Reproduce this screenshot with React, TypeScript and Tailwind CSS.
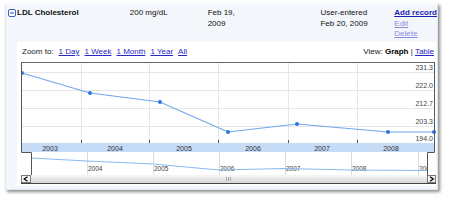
const ticks = [81, 149, 218, 288, 357];
const hLines = [72, 90, 108, 126];
const values = [
  { y: 70, label: "231.3" },
  { y: 88, label: "222.0" },
  { y: 106, label: "212.7" },
  { y: 124, label: "203.3" },
  { y: 141, label: "194.0" },
];
const years = [
  { x: 50, label: "2003" },
  { x: 115, label: "2004" },
  { x: 184, label: "2005" },
  { x: 253, label: "2006" },
  { x: 322, label: "2007" },
  { x: 391, label: "2008" },
];
const points: [number, number][] = [
  [22, 73],
  [90, 93],
  [160, 102],
  [228, 132],
  [297, 124],
  [388, 132],
  [434, 132],
];
const overview = [
  { x: 87, label: "2004" },
  { x: 153, label: "2005" },
  { x: 219, label: "2006" },
  { x: 285, label: "2007" },
  { x: 351, label: "2008" },
  { x: 418, label: "2009" },
];

function MinusBox() {
  return (
    <svg width="8" height="8" viewBox="0 0 8 8" className="mt-[1px] shrink-0">
      <rect x="0.5" y="0.5" width="7" height="7" rx="1.5" fill="#fff" stroke="#3d5fc4" />
      <line x1="2" y1="4" x2="6" y2="4" stroke="#3d5fc4" strokeWidth="1.2" />
    </svg>
  );
}

function Chart() {
  return (
    <svg
      width="415"
      height="122"
      viewBox="21 62 415 122"
      className="block ml-[4px]"
      fontFamily="'Liberation Sans', Arial, sans-serif"
    >
      <defs>
        <linearGradient id="track" x1="0" y1="0" x2="0" y2="1">
          <stop offset="0" stopColor="#f6f6f6" />
          <stop offset="1" stopColor="#d6d6d6" />
        </linearGradient>
        <clipPath id="ov">
          <rect x="31" y="152" width="396" height="23" />
        </clipPath>
      </defs>

      {/* main plot */}
      <rect x="21" y="62" width="413" height="81" fill="#fff" />
      {hLines.map((y) => (
        <line key={y} x1="21" x2="434" y1={y + 0.5} y2={y + 0.5} stroke="#e6e6e6" />
      ))}
      {ticks.map((x) => (
        <line key={x} x1={x + 0.5} x2={x + 0.5} y1="62" y2="143" stroke="#e6e6e6" />
      ))}
      {values.map((v) => (
        <text key={v.label} x="433" y={v.y} fontSize="7" textAnchor="end" fill="#444">
          {v.label}
        </text>
      ))}
      <polyline
        points={points.map((p) => p.join(",")).join(" ")}
        fill="none"
        stroke="#6fa6ee"
        strokeWidth="1.2"
      />
      {points.map(([x, y]) => (
        <circle key={x} cx={x} cy={y} r="2" fill="#2f74e0" />
      ))}

      {/* year band */}
      <rect x="21" y="143" width="413" height="9" fill="#c6dbf6" />
      {ticks.map((x) => (
        <line key={x} x1={x + 0.5} x2={x + 0.5} y1="140" y2="143" stroke="#555" />
      ))}
      {years.map((y) => (
        <text key={y.label} x={y.x} y="150.5" fontSize="7" textAnchor="middle" fill="#333">
          {y.label}
        </text>
      ))}

      {/* overview */}
      <rect x="31" y="152" width="396" height="23" fill="#fff" />
      <g clipPath="url(#ov)">
        {overview.map((o) => (
          <g key={o.label}>
            <line x1={o.x + 0.5} x2={o.x + 0.5} y1="152" y2="175" stroke="#dcdcdc" />
            <text x={o.x + 1} y="171" fontSize="6.5" fill="#444">
              {o.label}
            </text>
          </g>
        ))}
        <polyline
          points="31,158 87,161 153,164 219,170 285,168.5 351,170 427,170.5"
          fill="none"
          stroke="#8bb9f0"
          strokeWidth="1.2"
        />
      </g>

      {/* borders */}
      <line x1="21" x2="435" y1="62.5" y2="62.5" stroke="#666" />
      <path d="M21.5 62 V152.5 H31.5 V175" fill="none" stroke="#555" />
      <path d="M434.5 62 V152.5 H427.5 V175" fill="none" stroke="#555" />

      {/* scrollbar */}
      <rect x="31" y="175" width="396" height="8" fill="url(#track)" />
      <line x1="226.5" x2="226.5" y1="177" y2="181" stroke="#aaa" />
      <line x1="228.5" x2="228.5" y1="177" y2="181" stroke="#aaa" />
      <line x1="230.5" x2="230.5" y1="177" y2="181" stroke="#aaa" />
      <rect x="21.5" y="175.5" width="9" height="7" fill="#f2f2f2" stroke="#777" />
      <path d="M27.5 176.8 L24.2 179 L27.5 181.2" fill="none" stroke="#000" strokeWidth="1.2" />
      <rect x="427.5" y="175.5" width="8" height="7" fill="#f2f2f2" stroke="#777" />
      <path d="M430 176.8 L433.3 179 L430 181.2" fill="none" stroke="#000" strokeWidth="1.2" />
      <line x1="21" x2="436" y1="183.5" y2="183.5" stroke="#444" />
    </svg>
  );
}

export default function App() {
  return (
    <div className="w-[450px] h-[200px] bg-white pl-[5px] pt-[3px] font-['Liberation_Sans',Arial,sans-serif]">
      <div className="w-[433px] h-[187px] bg-[#f3f6fb] border border-[#e2e7f0] border-t-white shadow-[2px_2px_3px_rgba(0,0,0,0.45)] flex flex-col">
        {/* record header */}
        <div className="h-[38px] flex text-[8px] leading-[10.5px] text-[#111] pt-[4px] whitespace-nowrap">
          <div className="w-[124px] pl-[2px] flex gap-[1px] items-start">
            <MinusBox />
            <span className="font-bold">LDL Cholesterol</span>
          </div>
          <div className="w-[78px]">200 mg/dL</div>
          <div className="w-[113px]">
            Feb 19,
            <br />
            2009
          </div>
          <div className="w-[74px]">
            User-entered
            <br />
            Feb 20, 2009
          </div>
          <div className="flex-1 flex flex-col items-start">
            <a className="font-bold text-[#1c1cb0] underline">Add record</a>
            <a className="text-[#8c8ce0] underline">Edit</a>
            <a className="text-[#8c8ce0] underline">Delete</a>
          </div>
        </div>

        {/* graph panel */}
        <div className="ml-[11px] w-[419px] flex-1 mb-[3px] bg-white">
          <div className="h-[20px] pt-[5px] pl-[5px] pr-[2px] flex justify-between text-[8px] leading-[10.5px] text-[#222]">
            <div className="flex gap-[5px]">
              <span>Zoom to:</span>
              <a className="text-[#2727c4] underline">1 Day</a>
              <a className="text-[#2727c4] underline">1 Week</a>
              <a className="text-[#2727c4] underline">1 Month</a>
              <a className="text-[#2727c4] underline">1 Year</a>
              <a className="text-[#2727c4] underline">All</a>
            </div>
            <div>
              View: <span className="font-bold text-black">Graph</span> |{" "}
              <a className="text-[#2727c4] underline">Table</a>
            </div>
          </div>
          <Chart />
        </div>
      </div>
    </div>
  );
}
